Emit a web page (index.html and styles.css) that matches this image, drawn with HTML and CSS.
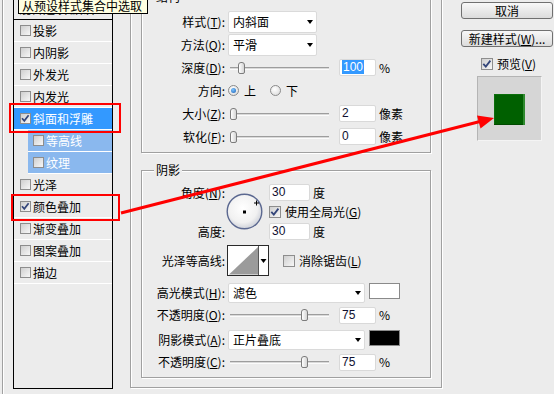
FILE: index.html
```html
<!DOCTYPE html>
<html lang="zh-CN">
<head>
<meta charset="utf-8">
<title>图层样式</title>
<link rel="stylesheet" href="styles.css">
</head>
<body>
<div class="dialog">
  <div class="side">
    <div class="list">
      <div class="item head">混合选项:默认</div>
      <div class="item"><span class="cb"></span>投影</div>
      <div class="item"><span class="cb"></span>内阴影</div>
      <div class="item"><span class="cb"></span>外发光</div>
      <div class="item"><span class="cb"></span>内发光</div>
      <div class="item sel"><span class="cb"><svg width="11" height="11" viewBox="0 0 11 11"><path d="M2 5.2 L4.3 7.8 L8.6 2.2" fill="none" stroke="#34467a" stroke-width="1.7"/></svg></span>斜面和浮雕</div>
      <div class="item sub"><span class="cb"></span>等高线</div>
      <div class="item sub"><span class="cb"></span>纹理</div>
      <div class="item"><span class="cb"></span>光泽</div>
      <div class="item"><span class="cb"><svg width="11" height="11" viewBox="0 0 11 11"><path d="M2 5.2 L4.3 7.8 L8.6 2.2" fill="none" stroke="#34467a" stroke-width="1.7"/></svg></span>颜色叠加</div>
      <div class="item"><span class="cb"></span>渐变叠加</div>
      <div class="item"><span class="cb"></span>图案叠加</div>
      <div class="item"><span class="cb"></span>描边</div>
    </div>
  </div>

  <div class="main">
    <div class="group g1">
      <span class="legend">结构</span>
      <div class="frow">
        <span class="lbl">样式(<u>T</u>):</span>
        <div class="ctl"><div class="select w89"><span>内斜面</span><i class="arr"></i></div></div>
      </div>
      <div class="frow">
        <span class="lbl">方法(<u>Q</u>):</span>
        <div class="ctl"><div class="select w89"><span>平滑</span><i class="arr"></i></div></div>
      </div>
      <div class="frow">
        <span class="lbl">深度(<u>D</u>):</span>
        <div class="ctl"><div class="slider"><span class="track"></span><span class="thumb" style="left:10px"></span></div><span class="inp"><span class="hl">100</span></span><span class="unit">%</span></div>
      </div>
      <div class="frow">
        <span class="lbl">方向:</span>
        <div class="ctl"><span class="radio on"></span><span class="rt">上</span><span class="radio r2"></span><span class="rt">下</span></div>
      </div>
      <div class="frow">
        <span class="lbl">大小(<u>Z</u>):</span>
        <div class="ctl"><div class="slider"><span class="track"></span><span class="thumb" style="left:2px"></span></div><span class="inp">2</span><span class="unit">像素</span></div>
      </div>
      <div class="frow">
        <span class="lbl">软化(<u>F</u>):</span>
        <div class="ctl"><div class="slider"><span class="track"></span><span class="thumb" style="left:2px"></span></div><span class="inp">0</span><span class="unit">像素</span></div>
      </div>
    </div>

    <div class="group g2">
      <span class="legend">阴影</span>
      <div class="angle">
        <span class="lbl ar1">角度(<u>N</u>):</span>
        <div class="dial">
          <svg width="38" height="38" viewBox="0 0 38 38">
            <defs>
              <radialGradient id="dg" cx="45%" cy="40%" r="60%">
                <stop offset="0" stop-color="#ffffff"/>
                <stop offset="0.7" stop-color="#f1f1f1"/>
                <stop offset="1" stop-color="#cfd2da"/>
              </radialGradient>
            </defs>
            <circle cx="18.5" cy="18.5" r="17.3" fill="url(#dg)" stroke="#5b6890" stroke-width="1.4"/>
            <rect x="17" y="17.5" width="3" height="3" fill="#000"/>
            <path d="M28 10 H33 M30.5 7.5 V12.5" stroke="#000" stroke-width="1"/>
          </svg>
        </div>
        <div class="ctl ar1c"><span class="inp w40">30</span><span class="unit">度</span></div>
        <div class="ctl ar2c"><span class="cb big"><svg width="12" height="12" viewBox="0 0 12 12"><path d="M2.3 5.8 L4.8 8.6 L9.4 2.6" fill="none" stroke="#34467a" stroke-width="1.8"/></svg></span><span class="cbt">使用全局光(<u>G</u>)</span></div>
        <span class="lbl ar3">高度:</span>
        <div class="ctl ar3c"><span class="inp w40">30</span><span class="unit">度</span></div>
      </div>

      <div class="frow crow">
        <span class="lbl">光泽等高线:</span>
        <div class="ctl c2">
          <svg class="contour" width="42" height="31" viewBox="0 0 42 31">
            <rect x="0.5" y="0.5" width="41" height="30" fill="#fff" stroke="#2a2a2a"/>
            <polygon points="2,29.5 31,2 31,29.5" fill="#9b9b9b"/>
            <line x1="31.5" y1="1" x2="31.5" y2="30" stroke="#555"/>
            <polygon points="33.5,14 39.5,14 36.5,18" fill="#000"/>
          </svg>
          <span class="cb big aa"></span><span class="cbt">消除锯齿(<u>L</u>)</span>
        </div>
      </div>

      <div class="frow r22 first">
        <span class="lbl">高光模式(<u>H</u>):</span>
        <div class="ctl top"><div class="select w137 h20"><span>滤色</span><i class="arr"></i></div><span class="swatch white"></span></div>
      </div>
      <div class="frow r22">
        <span class="lbl">不透明度(<u>O</u>):</span>
        <div class="ctl"><div class="slider"><span class="track"></span><span class="thumb" style="left:73px"></span></div><span class="inp">75</span><span class="unit">%</span></div>
      </div>
      <div class="frow r22 gap">
        <span class="lbl">阴影模式(<u>A</u>):</span>
        <div class="ctl top"><div class="select w137 h20"><span>正片叠底</span><i class="arr"></i></div><span class="swatch black"></span></div>
      </div>
      <div class="frow r22">
        <span class="lbl">不透明度(<u>C</u>):</span>
        <div class="ctl"><div class="slider"><span class="track"></span><span class="thumb" style="left:73px"></span></div><span class="inp">75</span><span class="unit">%</span></div>
      </div>
    </div>
  </div>

  <div class="right">
    <div class="btn">取消</div>
    <div class="btn">新建样式(<u>W</u>)...</div>
    <div class="prevchk"><span class="cb big"><svg width="12" height="12" viewBox="0 0 12 12"><path d="M2.3 5.8 L4.8 8.6 L9.4 2.6" fill="none" stroke="#34467a" stroke-width="1.8"/></svg></span><span class="cbt">预览(<u>V</u>)</span></div>
    <div class="preview"><div class="green"></div></div>
  </div>
</div>

<div class="tooltip">从预设样式集合中选取</div>
<div class="redbox rb1"></div>
<div class="redbox rb2"></div>
<svg class="arrow" width="554" height="394" viewBox="0 0 554 394">
  <line x1="121" y1="213" x2="481" y2="121.3" stroke="#ff0000" stroke-width="3"/>
  <polygon points="494,118 477,115.6 480.5,128.6" fill="#ff0000"/>
</svg>
</body>
</html>
```

FILE: styles.css
```css
* { box-sizing: border-box; }
html, body { margin: 0; padding: 0; }
body {
  width: 554px;
  height: 394px;
  overflow: hidden;
  position: relative;
  background: #ececec;
  font-family: "Noto Sans CJK SC", "Noto Sans", sans-serif;
  font-size: 12px;
  line-height: 14px;
  color: #000;
}
u { text-decoration: underline; text-underline-offset: 1px; }

.dialog { display: flex; align-items: flex-start; height: 394px; }

/* left style list */
.side {
  flex: none;
  height: 394px;
  margin-left: 2px;
  border-left: 1px solid #a0a0a0;
  box-shadow: inset 1px 0 0 #fff;
  padding: 0 17px 0 10px;
}
.list {
  width: 100px;
  height: 392px;
  margin-top: -3px;
  border: 1px solid #000;
  background: #ececec;
}
.item {
  height: 22px;
  display: flex;
  align-items: center;
  padding-left: 6px;
  border-bottom: 1px solid #fff;
  white-space: nowrap;
}
.item.head { border-bottom-color: #000; padding-left: 5px; }
.item .cb { margin-right: 2px; }
.item.sel { background: #3399ff; color: #fff; }
.item.sub { margin-left: 14px; padding-left: 5px; background: #8ab8ee; color: #fff; }

.cb {
  flex: none;
  position: relative;
  display: inline-block;
  width: 11px;
  height: 11px;
  border: 1px solid #8d8d8d;
  background: linear-gradient(135deg, #cfcfcf, #f7f7f7);
}
.cb svg { position: absolute; left: -1px; top: -1px; }
.cb.big { width: 12px; height: 12px; }
.cbt { margin-left: 4px; white-space: nowrap; }

/* main area */
.main {
  flex: none;
  width: 312px;
  margin-top: -20px;
  border: 1px solid #a0a0a0;
  box-shadow: 1px 1px 0 #fff, inset 1px 1px 0 #fff;
  padding: 16px 10px 9px;
}
.group {
  position: relative;
  border: 1px solid #a0a0a0;
  box-shadow: 1px 1px 0 #fff, inset 1px 1px 0 #fff;
}
.g1 { padding: 12px 0 4px; }
.g2 { margin-top: 17px; padding: 12px 0 4px; }
.legend {
  position: absolute;
  top: -8px;
  left: 12px;
  padding: 0 2px;
  background: #ececec;
}

.frow {
  display: grid;
  grid-template-columns: 83px auto;
  align-items: center;
  height: 23px;
}
.frow.r22 { height: 22px; }
.frow.first { margin-top: 6px; }
.frow.gap { margin-top: 3px; }
.frow.crow { height: 31px; margin-top: 4px; }
.lbl { text-align: right; white-space: nowrap; }
.ctl { display: flex; align-items: center; margin-left: 3px; white-space: nowrap; }
.ctl.top { align-items: flex-start; }
.ctl.c2 { margin-left: 2px; }

.select {
  display: flex;
  align-items: center;
  justify-content: space-between;
  height: 22px;
  padding: 0 3px 0 4px;
  background: #fff;
  border: 1px solid #dadada;
  border-radius: 2px;
}
.select.w89 { width: 89px; }
.select.w137 { width: 137px; }
.select.h20 { height: 20px; }
.arr {
  width: 0;
  height: 0;
  border-left: 3.5px solid transparent;
  border-right: 3.5px solid transparent;
  border-top: 4px solid #000;
}

.slider { position: relative; flex: none; width: 111px; height: 14px; }
.track {
  position: absolute;
  left: 2px;
  right: 10px;
  top: 6px;
  height: 3px;
  background: #d9d9d9;
  border-top: 1px solid #9d9d9d;
  border-bottom: 1px solid #fbfbfb;
}
.thumb {
  position: absolute;
  top: 1px;
  width: 7px;
  height: 12px;
  border: 1px solid #7c7c7c;
  border-radius: 3px 3px 2px 2px;
  background: linear-gradient(90deg, #ffffff, #d5d5d5);
}

.inp {
  flex: none;
  width: 37px;
  height: 17px;
  padding-left: 2px;
  background: #fff;
  border: 1px solid #d9d9d9;
  border-radius: 2px;
  font-family: "Liberation Sans", sans-serif;
  font-size: 12px;
  line-height: 15px;
  color: #101030;
}
.inp.w40 { width: 41px; }
.hl { background: #3399ff; color: #fff; padding: 0 1px; }
.unit { margin-left: 3px; }

.radio {
  flex: none;
  position: relative;
  width: 11px;
  height: 11px;
  border-radius: 50%;
  border: 1px solid #8a8a8a;
  background: radial-gradient(circle at 40% 35%, #ffffff, #d6d6d6);
}
.radio.on::after {
  content: "";
  position: absolute;
  left: 2px;
  top: 2px;
  width: 5px;
  height: 5px;
  border-radius: 50%;
  background: radial-gradient(circle at 40% 35%, #7cc4ff, #1a5fb4);
}
.rt { margin-left: 5px; }
.radio.r2 { margin-left: 14px; }

/* angle block */
.angle {
  display: grid;
  grid-template-columns: 83px 44px auto;
  grid-template-rows: 19px 20px 19px;
  align-items: center;
}
.ar1 { grid-column: 1; grid-row: 1; }
.ar3 { grid-column: 1; grid-row: 3; }
.dial { grid-column: 2; grid-row: 1 / 4; margin-left: 1px; display: flex; }
.ar1c, .ar2c, .ar3c { grid-column: 3; margin-left: 0; }
.ar1c { grid-row: 1; }
.ar2c { grid-row: 2; }
.ar3c { grid-row: 3; }

.contour { display: block; flex: none; }
.cb.aa { margin-left: 14px; }

.swatch { flex: none; width: 31px; height: 16px; margin-left: 4px; border: 1px solid #8a8a8a; }
.swatch.white { background: #fff; }
.swatch.black { background: #000; }

/* right column */
.right { flex: none; width: 112px; padding: 2px 0 0 19px; }
.btn {
  width: 92px;
  height: 17px;
  border: 1px solid #707070;
  border-radius: 3px;
  background: linear-gradient(#f8f8f8, #dcdcdc);
  text-align: center;
  line-height: 15px;
  white-space: nowrap;
}
.btn + .btn { margin-top: 11px; }
.prevchk { display: flex; align-items: center; height: 13px; margin-top: 10px; padding-left: 20px; }
.preview {
  width: 65px;
  height: 65px;
  margin: 6px 0 0 16px;
  padding: 17px 0 0 16px;
  background: #d6d6d6;
  border: 1px solid;
  border-color: #b4b4b4 #f4f4f4 #f4f4f4 #b4b4b4;
}
.green {
  width: 31px;
  height: 31px;
  background: #006000;
  box-shadow: inset -2px 0 0 #2f8a2f, inset 0 -1px 0 #004a00, inset 1px 1px 0 #0b6e0b;
}

/* overlays */
.tooltip {
  position: absolute;
  left: 18px;
  top: -3px;
  width: 130px;
  height: 17px;
  padding-left: 3px;
  border: 1px solid #000;
  background: #ffffe1;
  line-height: 15px;
  white-space: nowrap;
}
.redbox { position: absolute; border: 2px solid #ff0000; }
.rb1 { left: 9px; top: 103px; width: 112px; height: 30px; }
.rb2 { left: 11px; top: 194px; width: 109px; height: 27px; }
.arrow { position: absolute; left: 0; top: 0; }
```
